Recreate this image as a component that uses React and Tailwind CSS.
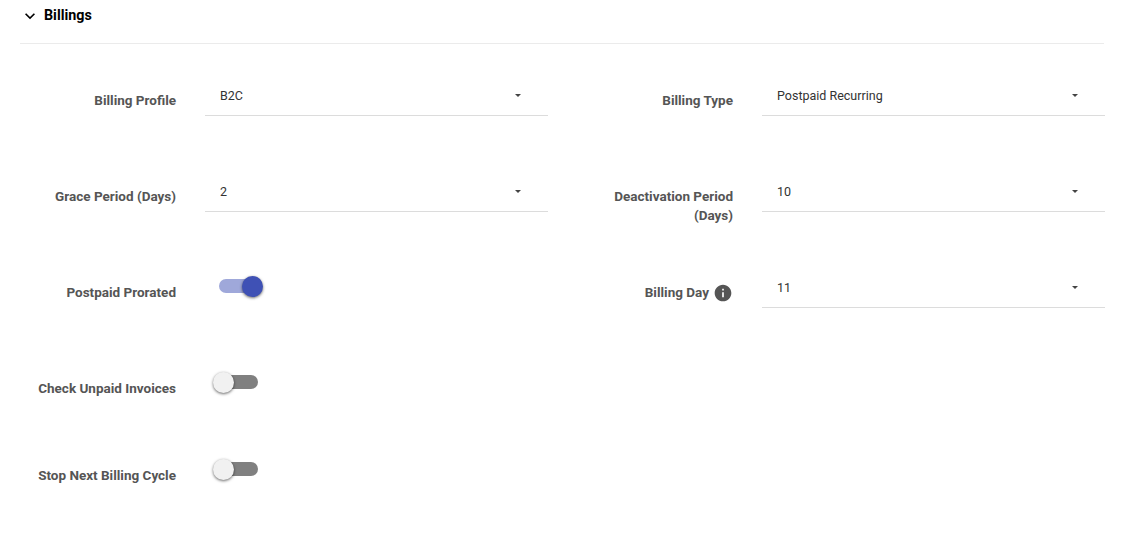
const Caret = () => (
  <svg width="6" height="3" viewBox="0 0 6 3" className="shrink-0">
    <path d="M0 0h6L3 3z" fill="#444" />
  </svg>
);

const Select = ({ value }) => (
  <div className="flex h-12 w-[343px] shrink-0 items-start justify-between border-b border-[#dcdcdc] pl-[15px] pr-[27px] pt-[20px]">
    <span className="text-[12.5px] leading-4 text-[#333]">{value}</span>
    <span className="mt-[6px] flex"><Caret /></span>
  </div>
);

const Toggle = ({ on }) => (
  <div className="relative mt-[11px] ml-[14px] h-[14px] w-[39px] rounded-full" style={{ backgroundColor: on ? "#9fa8da" : "#808080" }}>
    <span
      className={`absolute top-[-3px] h-[21px] w-[21px] rounded-full shadow-[0_1px_3px_rgba(0,0,0,0.6)] ${on ? "left-[23px] bg-[#3f51b5]" : "left-[-6px] bg-[#f1f1f1]"}`}
    />
  </div>
);

const Label = ({ children }) => (
  <div className="w-[156px] shrink-0 pt-[23px] text-right text-[13.5px] font-bold leading-[19px] text-[#555]">{children}</div>
);

const Field = ({ label, children }) => (
  <div className="flex w-[528px] gap-[29px]">
    <Label>{label}</Label>
    <div>{children}</div>
  </div>
);

export default function App() {
  return (
    <div className="h-[540px] w-[1124px] overflow-hidden bg-white px-5 font-['Roboto',sans-serif]">
      <div className="flex h-[44px] w-[1084px] items-start gap-1 border-b border-[#ebebeb] pt-[5px]">
        <svg width="20" height="20" viewBox="0 0 24 24" className="mt-[1px] shrink-0">
          <path d="M16.59 8.59L12 13.17 7.41 8.59 6 10l6 6 6-6z" fill="#000" />
        </svg>
        <span className="text-[14.3px] font-bold leading-5 text-black">Billings</span>
      </div>

      <div className="grid grid-cols-[528px_528px] grid-rows-[96px_96px_96px_87px_87px] gap-x-[29px] pt-6">
        <Field label="Billing Profile"><Select value="B2C" /></Field>
        <Field label="Billing Type"><Select value="Postpaid Recurring" /></Field>

        <Field label="Grace Period (Days)"><Select value="2" /></Field>
        <Field label="Deactivation Period (Days)"><Select value="10" /></Field>

        <Field label="Postpaid Prorated"><div className="pt-2"><Toggle on /></div></Field>
        <Field
          label={
            <span className="flex h-[19px] items-center justify-end gap-1">
              Billing Day
              <svg width="20" height="20" viewBox="0 0 24 24" className="shrink-0">
                <path d="M12 2C6.48 2 2 6.48 2 12s4.48 10 10 10 10-4.48 10-10S17.52 2 12 2zm1 15h-2v-6h2v6zm0-8h-2V7h2v2z" fill="#555" />
              </svg>
            </span>
          }
        >
          <Select value="11" />
        </Field>

        <Field label="Check Unpaid Invoices"><div className="pt-2"><Toggle /></div></Field>
        <div />

        <Field label="Stop Next Billing Cycle"><div className="pt-2"><Toggle /></div></Field>
        <div />
      </div>
    </div>
  );
}
